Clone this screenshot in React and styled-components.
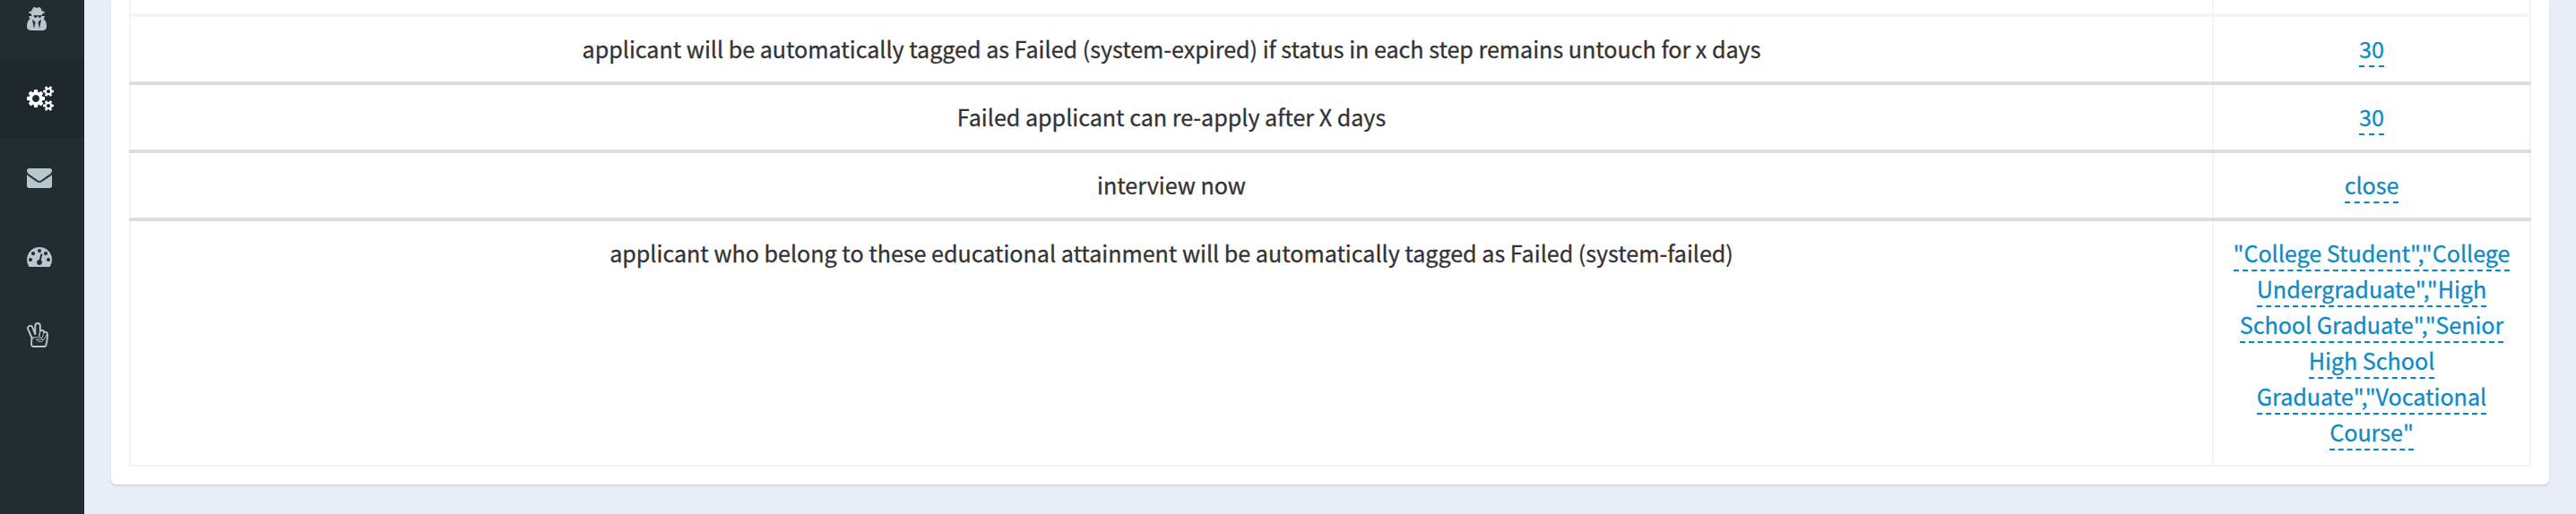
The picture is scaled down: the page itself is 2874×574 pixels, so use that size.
import React from "react";
import styled, { createGlobalStyle } from "styled-components";

const GlobalStyle = createGlobalStyle`
  *, *::before, *::after { box-sizing: border-box; }
  body {
    margin: 0;
    background: #e9edf6;
    color: #333;
    font-family: "Noto Sans CJK JP", "Noto Sans", sans-serif;
    font-size: 25.08px;
    line-height: 40px;
    -webkit-text-stroke: 0.3px currentColor;
  }
`;

const Page = styled.div`
  display: flex;
  height: 574px;
  overflow: hidden;
`;

const Sidebar = styled.nav`
  flex: none;
  width: 94px;
  height: 574px;
  background: #222d32;
  overflow: hidden;
`;

const Menu = styled.ul`
  list-style: none;
  margin: -22px 0 0;
  padding: 0;
`;

const MenuItem = styled.li`
  display: flex;
  align-items: center;
  height: 88px;
  padding-left: 30px;
  background: ${(p) => (p.$active ? "#1d292d" : "transparent")};
  color: ${(p) => (p.$active ? "#fff" : "#b8c7ce")};
`;

const Icon = styled.svg`
  display: block;
  width: ${(p) => p.$width}px;
  height: 28px;
  fill: currentColor;
`;

const OutlineIcon = styled(Icon)`
  fill: none;
  stroke: currentColor;
  stroke-linejoin: round;
  stroke-linecap: round;
`;

const Content = styled.main`
  flex: 1;
  padding: 0 30px;
`;

const Box = styled.section`
  height: 541px;
  padding: 0 20px 20px;
  background: #fff;
  border-radius: 0 0 6px 6px;
  box-shadow: 0 2px 2px rgba(0, 0, 0, 0.1);
`;

const Table = styled.div`
  display: flex;
  flex-direction: column;
`;

const Row = styled.div`
  display: grid;
  grid-template-columns: 2324px 1fr;
  border-bottom: ${(p) => p.$line || "4px solid #ddd"};
  min-height: ${(p) => p.$height || 0}px;
`;

const Cell = styled.div`
  padding: ${(p) => (p.$empty ? 0 : "16px")};
  border-left: 2px solid #f4f4f4;
  text-align: center;
  &:last-child { border-right: 2px solid #f4f4f4; }
`;

const Label = styled.span`
  position: relative;
  top: -1px;
`;

const Editable = styled.a`
  position: relative;
  top: -1px;
  color: #0f8ac6;
  text-decoration: none;
  border-bottom: 2px dashed #0088cc;
  padding-bottom: 1px;
`;

const icons = {
  secret: {
    box: "192 0 1408 1792",
    width: 22,
    d: "M704 1536l96-448-96-128-128-64zm384 0l128-640-128 64-96 128zm160-954q-2-4-4-6-10-8-96-8-70 0-167 19-7 2-21 2t-21-2q-97-19-167-19-86 0-96 8-2 2-4 6 2 18 4 27 2 3 7.5 6.5t7.5 10.5q2 4 7.5 20.5t7 20.5 7.5 17 8.5 17 9 14 12 13.5 14 9.5 17.5 8 20.5 4 24.5 2q36 0 59-12.5t32.5-30 14.5-34.5 11.5-29.5 17.5-12.5h12q11 0 17.5 12.5t11.5 29.5 14.5 34.5 32.5 30 59 12.5q13 0 24.5-2t20.5-4 17.5-8 14-9.5 12-13.5 9-14 8.5-17 7.5-17 7-20.5 7.5-20.5q2-7 7.5-10.5t7.5-6.5q2-9 4-27zm352 817q0 121-73 190t-194 69h-874q-121 0-194-69t-73-190q0-61 4.5-118t19-125.5 37.5-123.5 63.5-103.5 93.5-74.5l-90-220h214q-22-64-22-128 0-12 2-32-194-40-194-96 0-57 210-99 17-62 51.5-134t70.5-114q32-37 76-37 30 0 84 31t84 31 84-31 84-31q44 0 76 37 36 42 70.5 114t51.5 134q210 42 210 99 0 56-194 96 7 81-20 160h214l-82 225q63 33 107.5 96.5t65.5 143.5 29 151.5 8 148.5z",
  },
  cogs: {
    box: "0 0 1920 1792",
    width: 30,
    d: "M896 896q0-106-75-181t-181-75-181 75-75 181 75 181 181 75 181-75 75-181zm768 512q0-52-38-90t-90-38-90 38-38 90q0 53 37.5 90.5t90.5 37.5 90.5-37.5 37.5-90.5zm0-1024q0-52-38-90t-90-38-90 38-38 90q0 53 37.5 90.5t90.5 37.5 90.5-37.5 37.5-90.5zm-384 421v185q0 10-7 19.5t-16 10.5l-155 24q-11 35-32 76 34 48 90 115 7 11 7 20 0 12-7 19-23 30-82.5 89.5t-78.5 59.5q-11 0-21-7l-115-90q-37 19-77 31-11 108-23 155-7 24-30 24h-186q-11 0-20-7.5t-10-17.5l-23-153q-34-10-75-31l-118 89q-7 7-20 7-11 0-21-8-144-133-144-160 0-9 7-19 10-14 41-53t47-61q-23-44-35-82l-152-24q-10-1-17-9.5t-7-19.5v-185q0-10 7-19.5t16-10.5l155-24q11-35 32-76-34-48-90-115-7-11-7-20 0-12 7-20 22-30 82-89t79-59q11 0 21 7l115 90q34-18 77-32 11-108 23-154 7-24 30-24h186q11 0 20 7.5t10 17.5l23 153q34 10 75 31l118-89q8-7 20-7 11 0 21 8 144 133 144 160 0 8-7 19-12 16-42 54t-45 60q23 48 34 82l152 23q10 2 17 10.5t7 19.5zm640 533v140q0 16-149 31-12 27-30 52 51 113 51 138 0 4-4 7-122 71-124 71-8 0-46-47t-52-68q-20 2-30 2t-30-2q-14 21-52 68t-46 47q-2 0-124-71-4-3-4-7 0-25 51-138-18-25-30-52-149-15-149-31v-140q0-16 149-31 13-29 30-52-51-113-51-138 0-4 4-7 4-2 35-20t59-34 30-16q8 0 46 46.5t52 67.5q20-2 30-2t30 2q51-71 92-112l6-2q4 0 124 70 4 3 4 7 0 25-51 138 17 23 30 52 149 15 149 31zm0-1024v140q0 16-149 31-12 27-30 52 51 113 51 138 0 4-4 7-122 71-124 71-8 0-46-47t-52-68q-20 2-30 2t-30-2q-14 21-52 68t-46 47q-2 0-124-71-4-3-4-7 0-25 51-138-18-25-30-52-149-15-149-31v-140q0-16 149-31 13-29 30-52-51-113-51-138 0-4 4-7 4-2 35-20t59-34 30-16q8 0 46 46.5t52 67.5q20-2 30-2t30 2q51-71 92-112l6-2q4 0 124 70 4 3 4 7 0 25-51 138 17 23 30 52 149 15 149 31z",
  },
  envelope: {
    box: "0 0 1792 1792",
    width: 28,
    d: "M1792 710v794q0 66-47 113t-113 47h-1472q-66 0-113-47t-47-113v-794q44 49 101 87 362 246 497 345 57 42 92.5 65.5t94.5 48 110 24.5h2q51 0 110-24.5t94.5-48 92.5-65.5q170-123 498-345 57-39 100-87zm0-294q0 79-49 151t-122 123q-376 261-468 325-10 7-42.5 31t-54 38.5-52 32.5-57.5 27-50 9h-2q-23 0-50-9t-57.5-27-52-32.5-54-38.5-42.5-31q-91-64-262-182.5t-205-142.5q-62-42-117-115.5t-55-136.5q0-78 41.5-130t118.5-52h1472q65 0 112.5 47t47.5 113z",
  },
  gauge: {
    box: "0 0 1792 1792",
    width: 28,
    d: "M384 1152q0-53-37.5-90.5t-90.5-37.5-90.5 37.5-37.5 90.5 37.5 90.5 90.5 37.5 90.5-37.5 37.5-90.5zm192-448q0-53-37.5-90.5t-90.5-37.5-90.5 37.5-37.5 90.5 37.5 90.5 90.5 37.5 90.5-37.5 37.5-90.5zm428 481l101-382q6-26-7.5-48.5t-38.5-29.5-48 6.5-30 39.5l-101 382q-60 5-107 43.5t-63 98.5q-20 77 20 146t117 89 146-20 89-117q16-60-6-117t-72-91zm660-33q0-53-37.5-90.5t-90.5-37.5-90.5 37.5-37.5 90.5 37.5 90.5 90.5 37.5 90.5-37.5 37.5-90.5zm-640-640q0-53-37.5-90.5t-90.5-37.5-90.5 37.5-37.5 90.5 37.5 90.5 90.5 37.5 90.5-37.5 37.5-90.5zm448 192q0-53-37.5-90.5t-90.5-37.5-90.5 37.5-37.5 90.5 37.5 90.5 90.5 37.5 90.5-37.5 37.5-90.5zm320 448q0 261-141 483-19 29-54 29h-1402q-35 0-54-29-141-221-141-483 0-182 71-348t191-286 286-191 348-71 348 71 286 191 191 286 71 348z",
  },
};

const MenuIcon = ({ name }) => (
  <Icon viewBox={icons[name].box} $width={icons[name].width} aria-hidden="true">
    <path d={icons[name].d} />
  </Icon>
);

const PeaceIcon = () => (
  <OutlineIcon viewBox="0 0 24 28" $width={24} aria-hidden="true">
    <path
      strokeWidth="1.9"
      d="M5.4 17 1.3 7.7C.6 5.7 1.5 4.3 3 3.9c1.7-.4 2.8.3 3.4 1.9l2.9 7.4V3.8C9.2 2 10.4 1 12 1s2.8 1 2.8 2.8v5.9c1.2-1.4 4.2-1 4.5 1.4 1.3-.9 3.7 0 3.7 2.1l-.4 6.5-1.1 5c-.3 1.6-1 2.3-2.2 2.3H7.8C6 27 5 26.2 5 24.4z"
    />
    <path
      strokeWidth="0.9"
      d="M14.8 9.8 13.4 14.6M19.2 11.2l-2.4 6.2c-.5 1.8.9 3 2.2 1.8l3.2-5.4M14.8 10.5l-1 5.2M5.6 17.4c1.5-1 3-.8 9.6-.6 1.6.1 1.6 2 .2 2.3l-5 .3M5.8 18.4l2.4-.8M11 19.5c1.6 1.5 2.1 2.1 3.8 2.1 2 0 2.7-.8 3.3-1.8"
    />
  </OutlineIcon>
);

const settings = [
  {
    label:
      "applicant will be automatically tagged as Failed (system-expired) if status in each step remains untouch for x days",
    value: "30",
  },
  { label: "Failed applicant can re-apply after X days", value: "30" },
  { label: "interview now", value: "close" },
  {
    label:
      "applicant who belong to these educational attainment will be automatically tagged as Failed (system-failed)",
    value:
      '"College Student","College Undergraduate","High School Graduate","Senior High School Graduate","Vocational Course"',
    line: "2px solid #f4f4f4",
  },
];

export default function App() {
  return (
    <Page>
      <GlobalStyle />
      <Sidebar>
        <Menu>
          <MenuItem><MenuIcon name="secret" /></MenuItem>
          <MenuItem $active><MenuIcon name="cogs" /></MenuItem>
          <MenuItem><MenuIcon name="envelope" /></MenuItem>
          <MenuItem><MenuIcon name="gauge" /></MenuItem>
          <MenuItem><PeaceIcon /></MenuItem>
        </Menu>
      </Sidebar>
      <Content>
        <Box>
          <Table>
            <Row $height={19} $line="4px solid #f4f4f4">
              <Cell $empty />
              <Cell $empty />
            </Row>
            {settings.map((s) => (
              <Row key={s.label} $line={s.line}>
                <Cell><Label>{s.label}</Label></Cell>
                <Cell><Editable>{s.value}</Editable></Cell>
              </Row>
            ))}
          </Table>
        </Box>
      </Content>
    </Page>
  );
}
